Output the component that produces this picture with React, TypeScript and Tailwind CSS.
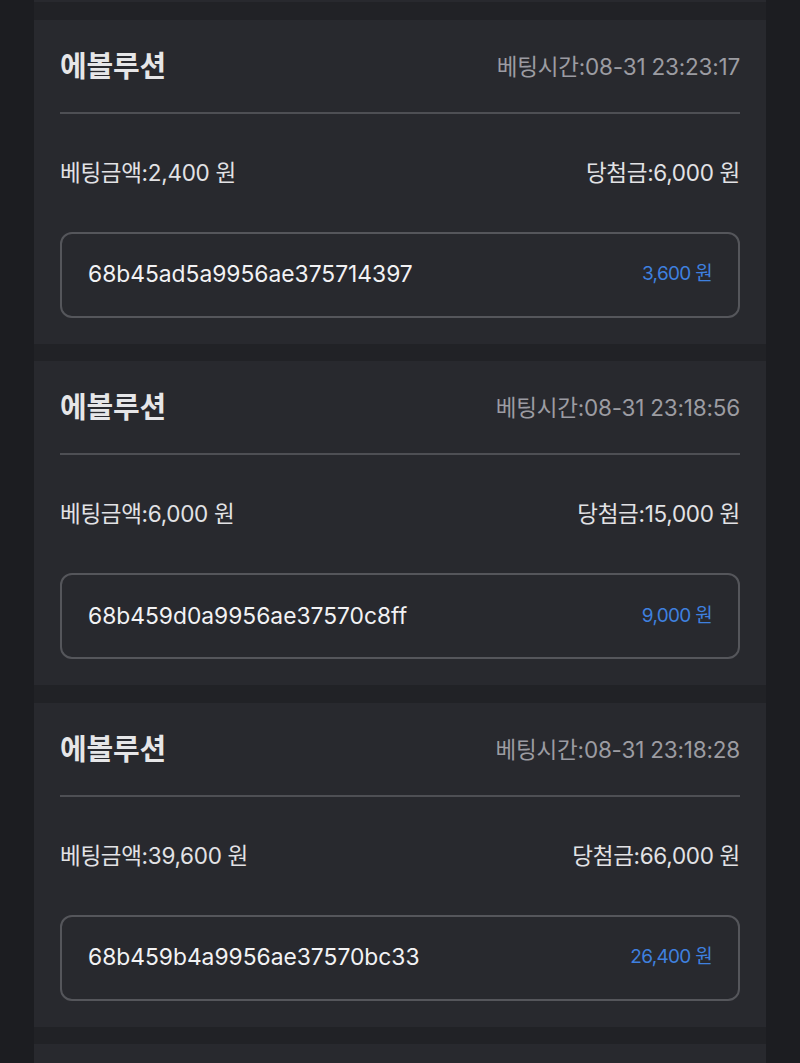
const bets = [
  {
    game: '에볼루션',
    time: '08-31 23:23:17',
    amount: '2,400',
    win: '6,000',
    id: '68b45ad5a9956ae375714397',
    profit: '3,600',
  },
  {
    game: '에볼루션',
    time: '08-31 23:18:56',
    amount: '6,000',
    win: '15,000',
    id: '68b459d0a9956ae37570c8ff',
    profit: '9,000',
  },
  {
    game: '에볼루션',
    time: '08-31 23:18:28',
    amount: '39,600',
    win: '66,000',
    id: '68b459b4a9956ae37570bc33',
    profit: '26,400',
  },
]

function BetCard({ bet }: { bet: (typeof bets)[number] }) {
  return (
    <div className="flex h-[324px] shrink-0 flex-col bg-[#28292e] px-[26px] pt-[26px] pb-[26px]">
      <div className="flex h-[42px] items-center justify-between">
        <span className="text-[29px] font-bold tracking-[-0.2px] text-[#e6e6e8]">{bet.game}</span>
        <span className="text-[22.5px] tracking-[-0.2px] text-[#9c9ca2]">베팅시간:{bet.time}</span>
      </div>
      <div className="mt-[24px] h-[2px] bg-[#4e4f54]" />
      <div className="mt-[44px] flex h-[30px] items-center justify-between text-[22.5px] tracking-[-0.3px] text-[#e2e2e5]">
        <span>베팅금액:{bet.amount} 원</span>
        <span>당첨금:{bet.win} 원</span>
      </div>
      <div className="mt-[44px] flex h-[86px] items-center justify-between rounded-[12px] border-2 border-[#55565b] pr-[26px] pl-[26px]">
        <span className="text-[22.8px] text-[#f2f2f4]">{bet.id}</span>
        <span className="text-[19px] tracking-[-0.7px] text-[#3f80df]">{bet.profit} 원</span>
      </div>
    </div>
  )
}

export default function App() {
  return (
    <div
      className="flex h-[1063px] w-[800px] justify-center overflow-hidden bg-[#1c1d21]"
      style={{ fontFamily: 'Inter, "Noto Sans CJK KR", sans-serif' }}
    >
      <div className="flex w-[732px] flex-col gap-[17.5px] bg-[#212226]">
        <div className="h-[2px] shrink-0 bg-[#28292e]" />
        {bets.map((bet) => (
          <BetCard key={bet.id} bet={bet} />
        ))}
        <div className="h-[40px] shrink-0 bg-[#28292e]" />
      </div>
    </div>
  )
}
